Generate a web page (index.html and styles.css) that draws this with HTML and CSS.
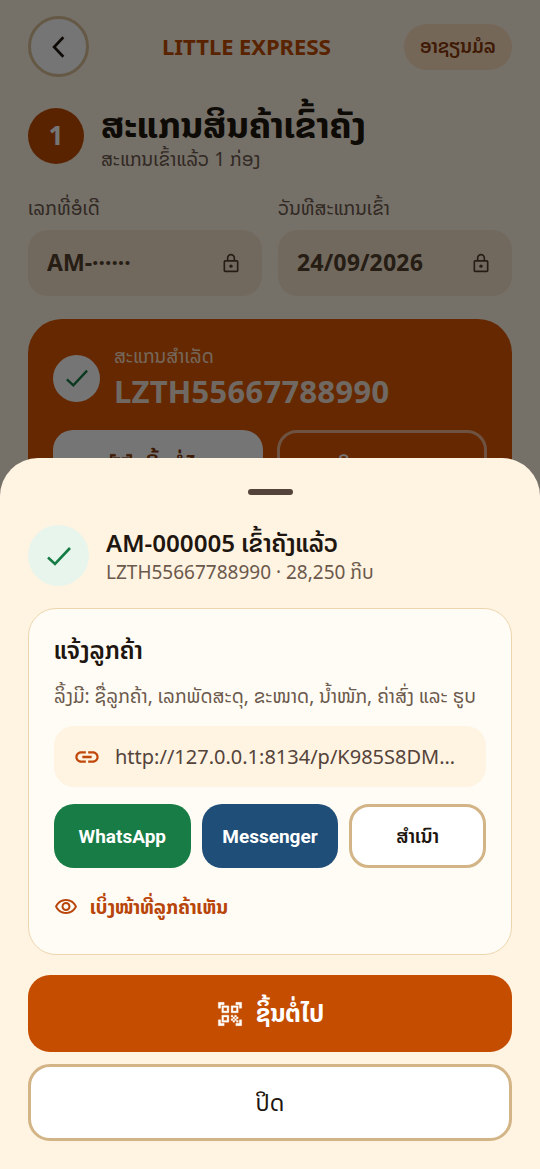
FILE: index.html
```
<!DOCTYPE html>
<html lang="lo">
<head>
<meta charset="utf-8">
<meta name="viewport" content="width=device-width, initial-scale=1">
<title>Little Express</title>
<link rel="stylesheet" href="styles.css">
</head>
<body>
<svg class="defs" aria-hidden="true">
  <symbol id="check" viewBox="0 0 24 24"><path d="M1 13.500l7 6.500L23 4" fill="none" stroke="currentColor" stroke-width="2.600"/></symbol>
  <symbol id="lock" viewBox="0 0 24 24"><path d="M5 9.500h14a1 1 0 0 1 1 1V21a1 1 0 0 1-1 1H5a1 1 0 0 1-1-1V10.500a1 1 0 0 1 1-1zM8 9.500V6a4 4 0 0 1 8 0v3.500" fill="none" stroke="currentColor" stroke-width="2"/><circle cx="12" cy="15.800" r="2" fill="currentColor"/></symbol>
  <symbol id="qr" viewBox="0 0 24 24"><path d="M9.500 6.500v3h-3v-3h3M11 5H5v6h6V5zm-1.500 9.500v3h-3v-3h3M11 13H5v6h6v-6zm6.500-6.500v3h-3v-3h3M19 5h-6v6h6V5zm-6 8h1.500v1.500H13V13zm1.500 1.500H16V16h-1.500v-1.500zM16 13h1.500v1.500H16V13zm-3 3h1.500v1.500H13V16zm1.500 1.500H16V19h-1.500v-1.500zM16 16h1.500v1.500H16V16zm1.500-1.500H19V16h-1.500v-1.500zm0 3H19V19h-1.500v-1.500zM22 7h-2V4h-3V2h5v5zm0 15v-5h-2v3h-3v2h5zM2 22h5v-2H4v-3H2v5zM2 2v5h2V4h3V2H2z" fill="currentColor" stroke="currentColor" stroke-width=".3"/></symbol>
</svg>
<main class="page">
  <header class="topbar">
    <button class="back" aria-label="Back"><svg class="icon" viewBox="0 0 24 24"><path d="M16 3l-8.500 9 8.500 9" fill="none" stroke="currentColor" stroke-width="2.500"/></svg></button>
    <div class="brand">LITTLE EXPRESS</div>
    <div class="badge">ອາຊຽນມໍລ</div>
  </header>
  <section class="step">
    <div class="step-number">1</div>
    <div>
      <h1 class="step-title">ສະແກນສິນຄ້າເຂົ້າຄັງ</h1>
      <p class="step-note">ສະແກນເຂົ້າແລ້ວ 1 ກ່ອງ</p>
    </div>
  </section>
  <section class="fields">
    <div class="field">
      <label for="order">ເລກທີ່ອໍເດີ</label>
      <div class="field-box"><input id="order" value="AM-······" readonly><svg class="icon"><use href="#lock"/></svg></div>
    </div>
    <div class="field">
      <label for="date">ວັນທີສະແກນເຂົ້າ</label>
      <div class="field-box"><input id="date" value="24/09/2026" readonly><svg class="icon"><use href="#lock"/></svg></div>
    </div>
  </section>
  <section class="result">
    <div class="result-head">
      <div class="result-check"><svg class="icon"><use href="#check"/></svg></div>
      <div>
        <p class="result-label">ສະແກນສຳເລັດ</p>
        <p class="result-code">LZTH55667788990</p>
      </div>
    </div>
    <div class="result-actions">
      <button class="result-next"><svg class="icon"><use href="#qr"/></svg>ຊິ້ນຕໍ່ໄປ</button>
      <button class="result-print">ພິມເອກະສານ</button>
    </div>
  </section>
</main>
<div class="scrim"></div>
<section class="sheet" role="dialog" aria-labelledby="sheet-title">
  <div class="handle"></div>
  <header class="sheet-head">
    <div class="sheet-check"><svg class="icon"><use href="#check"/></svg></div>
    <div>
      <h2 class="sheet-title" id="sheet-title">AM-000005 ເຂົ້າຄັງແລ້ວ</h2>
      <p class="sheet-note">LZTH55667788990 · 28,250 ກີບ</p>
    </div>
  </header>
  <div class="card">
    <h3 class="card-title">ແຈ້ງລູກຄ້າ</h3>
    <p class="card-note">ລິ້ງມີ: ຊື່ລູກຄ້າ, ເລກພັດສະດຸ, ຂະໜາດ, ນ້ຳໜັກ, ຄ່າສົ່ງ ແລະ ຮູບ</p>
    <div class="url">
      <svg class="icon" viewBox="0 0 24 24"><path d="M3.900 12c0-1.710 1.390-3.100 3.100-3.100h4V7H7c-2.760 0-5 2.240-5 5s2.240 5 5 5h4v-1.900H7c-1.710 0-3.100-1.390-3.100-3.100zM8 13h8v-2H8v2zm9-6h-4v1.900h4c1.710 0 3.100 1.390 3.100 3.100s-1.390 3.100-3.100 3.100h-4V17h4c2.760 0 5-2.240 5-5s-2.240-5-5-5z" fill="currentColor"/></svg>
      <span class="url-text">http://127.0.0.1:8134/p/K985S8DM…</span>
    </div>
    <div class="share">
      <button class="whatsapp">WhatsApp</button>
      <button class="messenger">Messenger</button>
      <button class="copy">ສຳເນົາ</button>
    </div>
    <a class="preview" href="#"><svg class="icon" viewBox="0 0 24 24"><path d="M12 6c3.790 0 7.170 2.130 8.820 5.500C19.170 14.870 15.790 17 12 17s-7.170-2.130-8.820-5.500C4.830 8.130 8.210 6 12 6m0-2C7 4 2.730 7.110 1 11.500 2.730 15.890 7 19 12 19s9.270-3.110 11-7.500C21.270 7.110 17 4 12 4zm0 5a2.500 2.500 0 0 1 0 5 2.500 2.500 0 0 1 0-5m0-2a4.500 4.500 0 0 0 0 9 4.500 4.500 0 0 0 0-9z" fill="currentColor"/></svg>ເບິ່ງໜ້າທີ່ລູກຄ້າເຫັນ</a>
  </div>
  <div class="actions">
    <button class="next"><svg class="icon"><use href="#qr"/></svg>ຊິ້ນຕໍ່ໄປ</button>
    <button class="close">ປິດ</button>
  </div>
</section>
</body>
</html>
```
FILE: styles.css
```
* { box-sizing: border-box; }
body, h1, h2, h3, p { margin: 0; }
body {
  min-height: 100vh;
  overflow: hidden;
  background: #fff3e2;
  color: #20160f;
  font-family: "Noto Sans Lao", "Noto Sans", sans-serif;
  font-size: 19px;
}
button, input { font: inherit; color: inherit; }
button { cursor: pointer; }
.defs { display: none; }
.icon { width: 24px; height: 24px; flex: none; }

.page { padding: 16px 28px; }
.topbar { display: flex; align-items: center; justify-content: space-between; }
.back {
  display: grid; place-items: center;
  width: 61px; height: 61px; padding: 0;
  border: 3px solid #dcc29a; border-radius: 50%; background: #fff;
}
.back .icon { width: 26px; height: 26px; }
.brand { color: #c44d00; font-size: 22px; font-weight: 700; line-height: 28px; }
.badge {
  padding: 9px 16px; border-radius: 24px;
  background: #ffe0c0; color: #8a3a0a;
  font-size: 19px; font-weight: 600; line-height: 28px;
}

.step { display: flex; align-items: center; gap: 17px; margin-top: 24px; }
.step-number {
  display: grid; place-items: center; width: 56px; height: 56px;
  border-radius: 50%; background: #c44d00; color: #fff;
  font-size: 26px; font-weight: 700; line-height: 28px;
}
.step-title { font-size: 36px; font-weight: 700; line-height: 48px; }
.step-note { color: #6b594c; line-height: 22px; }

.fields { display: grid; grid-template-columns: repeat(2, minmax(0, 1fr)); gap: 16px; margin-top: 22px; }
.field label { display: block; color: #6b594c; line-height: 32px; margin-bottom: 5px; }
.field-box {
  display: flex; align-items: center; height: 66px; padding: 0 21px 0 19px;
  border-radius: 20px; background: #f6e5cd; color: #54422e;
}
.field-box input {
  flex: 1; min-width: 0; padding: 0; border: 0; background: none; outline: 0;
  font-size: 23px; font-weight: 700;
}
.field-box .icon { width: 20px; height: 22px; }

.result { margin-top: 23px; padding: 24px 25px; border-radius: 34px; background: #dc5800; color: #fff; }
.result-head { display: flex; align-items: center; gap: 14px; }
.result-check {
  display: grid; place-items: center; width: 47px; height: 47px;
  border-radius: 50%; background: #fff; color: #167c45;
}
.result-check .icon { width: 22px; height: 22px; }
.sheet-check .icon { width: 24px; height: 24px; }
.result-label { color: #ffe0c8; line-height: 28px; }
.result-code { font-size: 31px; font-weight: 700; line-height: 42px; color: #f5e4d8; }
.result-actions { display: grid; grid-template-columns: 1fr 1fr; gap: 14px; margin-top: 17px; }
.result-actions button {
  display: flex; align-items: center; justify-content: center; gap: 12px;
  height: 70px; border: 0; border-radius: 20px; font-size: 22px; font-weight: 700;
}
.result-actions .result-next { background: #fff; color: #8a3a0a; }
.result-actions .result-print { border: 3px solid #efb590; background: none; font-size: 19px; }
.result-next .icon { width: 26px; height: 26px; }
.next .icon, .url .icon { width: 28px; height: 28px; }

.scrim { position: fixed; inset: 0; background: rgba(0, 0, 0, 0.54); }

.sheet {
  position: fixed; left: 0; right: 0; bottom: 0;
  padding: 31px 28px 28px;
  border-radius: 38px 38px 0 0; background: #fff3e2;
}
.handle { width: 45px; height: 6px; margin: 0 auto; border-radius: 3px; background: #54433a; }
.sheet-head { display: flex; align-items: center; gap: 17px; margin-top: 30px; }
.sheet-check {
  display: grid; place-items: center; width: 61px; height: 61px;
  border-radius: 50%; background: #e8f5ec; color: #167c45;
}
.sheet-title { font-size: 24px; font-weight: 600; line-height: 34px; }
.sheet-note { color: #6b594c; line-height: 24px; }

.card {
  margin-top: 22px; padding: 25px;
  border: 1px solid #edd6ae; border-radius: 28px; background: #fffcf5;
}
.card-title { font-size: 24px; font-weight: 600; line-height: 34px; }
.card-note { margin-top: 15px; color: #6b594c; line-height: 28px; }
.url {
  display: flex; align-items: center; gap: 14px;
  height: 61px; margin-top: 15px; padding: 0 19px;
  border-radius: 20px; background: #fff3e2; color: #54433a; font-size: 20px;
}
.url .icon { color: #c0480a; }
.url-text { min-width: 0; overflow: hidden; text-overflow: ellipsis; white-space: nowrap; }
.share { display: grid; grid-template-columns: repeat(3, 1fr); gap: 11px; margin-top: 17px; }
.share button {
  height: 64px; padding: 0; border: 0; border-radius: 20px;
  color: #fff; font-family: Roboto, "Noto Sans Lao", sans-serif; font-size: 19px; font-weight: 700;
}
.share .whatsapp { background: #177c45; }
.share .messenger { background: #1f4e79; }
.share .copy { border: 3px solid #d3b486; background: #fff; color: #20160f; font-weight: 600; }
.preview {
  display: flex; align-items: center; gap: 12px;
  height: 44px; margin-top: 17px;
  color: #b8450a; font-weight: 700;
  text-decoration: none;
}

.actions { display: grid; gap: 12px; margin-top: 20px; }
.actions button {
  display: flex; align-items: center; justify-content: center; gap: 12px;
  height: 77px; border-radius: 22px; font-size: 23px;
}
.actions .next { border: 0; background: #c44d00; color: #fff; font-size: 24px; font-weight: 700; }
.actions .close { border: 3px solid #d3b486; background: #fff; }
```
